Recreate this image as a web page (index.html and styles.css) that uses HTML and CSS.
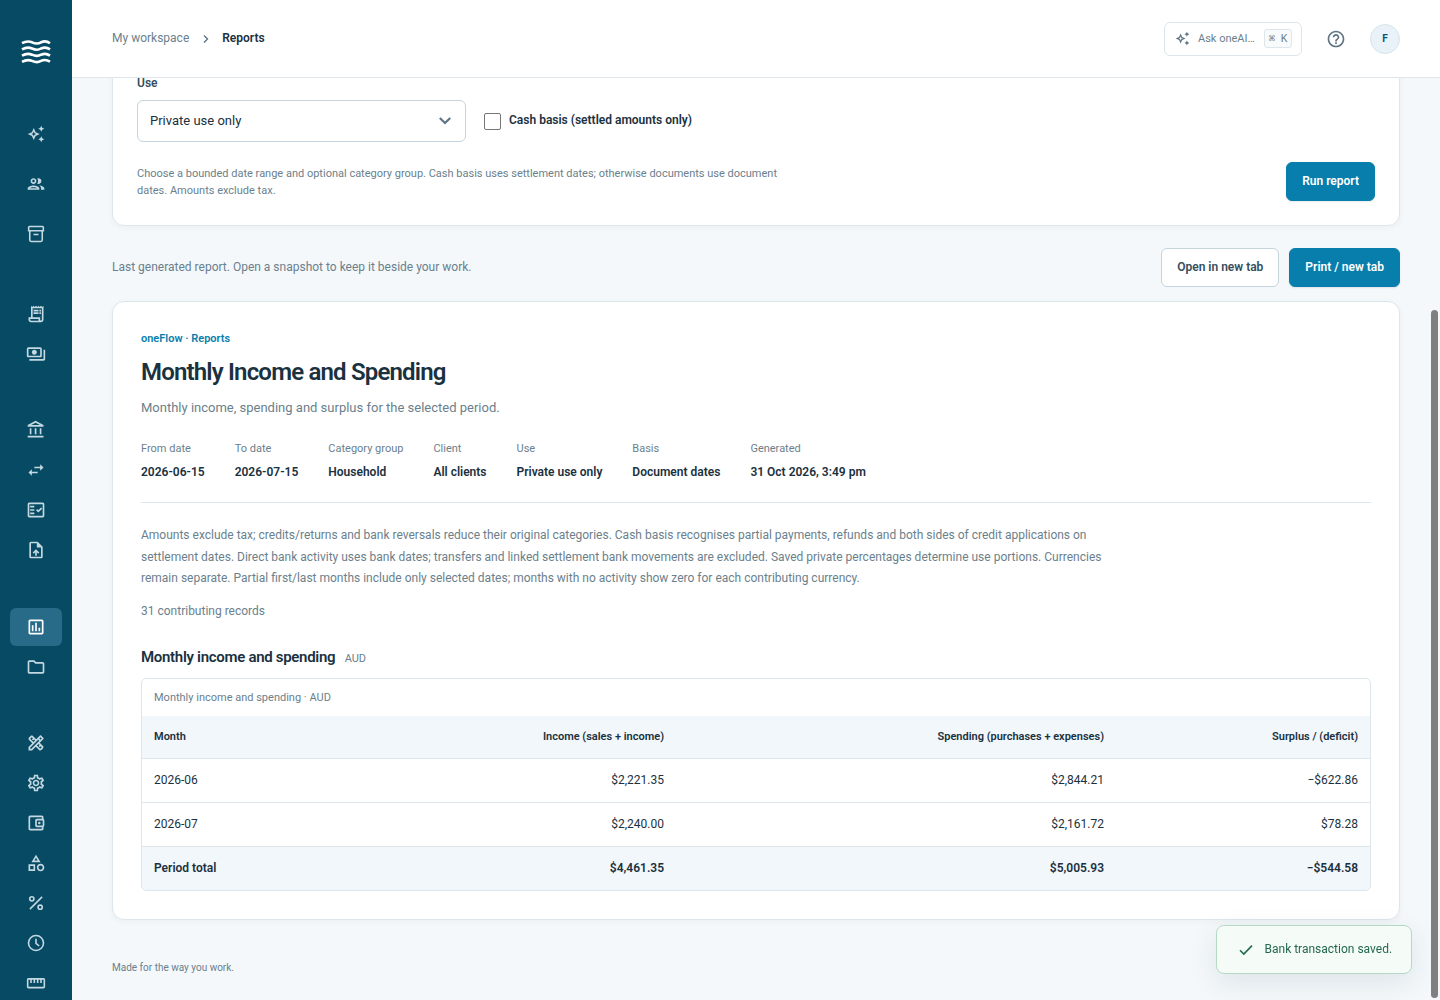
FILE: index.html
```html
<!DOCTYPE html>
<html lang="en">
<head>
    <meta charset="UTF-8">
    <meta name="viewport" content="width=device-width, initial-scale=1.0">
    <title>Reports - oneFlow</title>
    <link rel="stylesheet" href="styles.css">
</head>
<body>
    <!-- Sidebar -->
    <nav class="sidebar">
        <a class="logo" href="#" aria-label="oneFlow">
            <svg width="30" height="28" viewBox="0 0 30 28" fill="none" stroke="#fff" stroke-width="2.6"><path d="M1 4.2C5 2 8 2 11 3.3C15 5.2 17 5.2 20 3.3C23 2 26 2 29 4.2M1 10.4C5 8.2 8 8.2 11 9.5C15 11.4 17 11.4 20 9.5C23 8.2 26 8.2 29 10.4M1 16.6C5 14.4 8 14.4 11 15.7C15 17.6 17 17.6 20 15.7C23 14.4 26 14.4 29 16.6M1 22.8C5 20.6 8 20.6 11 21.9C15 23.8 17 23.8 20 21.9C23 20.6 26 20.6 29 22.8"/></svg>
        </a>
        <div class="nav-group nav-main">
            <a href="#" class="nav-item"><svg class="icon-sm" viewBox="0 0 24 24"><path d="M19 9l1.25-2.75L23 5l-2.75-1.25L19 1l-1.25 2.75L15 5l2.75 1.25L19 9zm0 6l-1.25 2.75L15 19l2.75 1.25L19 23l1.25-2.75L23 19l-2.75-1.25L19 15zm-7.5-5.5L9 4 6.5 9.5 1 12l5.5 2.5L9 20l2.5-5.5L17 12l-5.5-2.5zm-1.51 3.49L9 15.17l-.99-2.18L5.83 12l2.18-.99L9 8.83l.99 2.18 2.18.99-2.18.99z"/></svg></a>
            <a href="#" class="nav-item"><svg viewBox="0 0 24 24"><path d="M9 13.75c-2.34 0-7 1.17-7 3.5V19h14v-1.75c0-2.33-4.66-3.5-7-3.5zM4.34 17c.84-.58 2.87-1.25 4.66-1.25s3.82.67 4.66 1.25H4.34zM9 12c1.93 0 3.5-1.57 3.5-3.5S10.93 5 9 5 5.5 6.57 5.5 8.5 7.07 12 9 12zm0-5c.83 0 1.5.67 1.5 1.5S9.83 10 9 10s-1.5-.67-1.5-1.5S8.17 7 9 7zm7.04 6.81c1.16.84 1.96 1.96 1.96 3.44V19h4v-1.75c0-2.02-3.5-3.17-5.96-3.44zM15 12c1.93 0 3.5-1.57 3.5-3.5S16.93 5 15 5c-.54 0-1.04.13-1.5.35.63.89 1 1.98 1 3.15s-.37 2.26-1 3.15c.46.22.96.35 1.5.35z"/></svg></a>
            <a href="#" class="nav-item"><svg class="line" viewBox="0 0 24 24"><path d="M4.2 3h15.6a1 1 0 0 1 1 1v4H3.2V4a1 1 0 0 1 1-1zM4.5 8v11.3a1.6 1.6 0 0 0 1.6 1.6h11.8a1.6 1.6 0 0 0 1.6-1.6V8M9 12.5h6"/></svg></a>
        </div>
        <div class="nav-group nav-sales">
            <a href="#" class="nav-item"><svg viewBox="0 0 24 24"><path d="M19.5 3.5L18 2l-1.5 1.5L15 2l-1.5 1.5L12 2l-1.5 1.5L9 2 7.5 3.5 6 2v14H3v3c0 1.66 1.34 3 3 3h12c1.66 0 3-1.34 3-3V2l-1.5 1.5zM15 20H6c-.55 0-1-.45-1-1v-1h10v2zm4-1c0 .55-.45 1-1 1s-1-.45-1-1v-3H8V5h11v14zM9 7h6v2H9zM16 7h2v2h-2zM9 10h6v2H9zM16 10h2v2h-2z"/></svg></a>
            <a href="#" class="nav-item"><svg viewBox="0 0 24 24"><path d="M19 14V6c0-1.1-.9-2-2-2H3c-1.1 0-2 .9-2 2v8c0 1.1.9 2 2 2h14c1.1 0 2-.9 2-2zm-2 0H3V6h14v8zm-7-7c-1.66 0-3 1.34-3 3s1.34 3 3 3 3-1.34 3-3-1.34-3-3-3zm13 0v11c0 1.1-.9 2-2 2H4v-2h17V7h2z"/></svg></a>
        </div>
        <div class="nav-group nav-bank">
            <a href="#" class="nav-item"><svg viewBox="0 0 24 24"><path d="M6.5 10h-2v7h2v-7zm6 0h-2v7h2v-7zm8.5 9H2v2h19v-2zm-2.5-9h-2v7h2v-7zm-7-6.74L16.71 6H6.29l5.21-2.74m0-2.26L2 6v2h19V6l-9.5-5z"/></svg></a>
            <a href="#" class="nav-item"><svg viewBox="0 0 24 24"><path d="M6.99 11L3 15l3.99 4v-3H14v-2H6.99v-3zM21 9l-3.99-4v3H10v2h7.01v3L21 9z"/></svg></a>
            <a href="#" class="nav-item"><svg viewBox="0 0 24 24"><path d="M20 3H4c-1.1 0-2 .9-2 2v14c0 1.1.9 2 2 2h16c1.1 0 2-.9 2-2V5c0-1.1-.9-2-2-2zm0 16H4V5h16v14z"/><path d="M19.41 10.42L17.99 9l-3.17 3.17-1.41-1.42L12 12.16 14.82 15zM5 7h5v2H5zM5 11h5v2H5zM5 15h5v2H5z"/></svg></a>
            <a href="#" class="nav-item"><svg viewBox="0 0 24 24"><path d="M14 2H6c-1.1 0-1.99.9-1.99 2L4 20c0 1.1.89 2 1.99 2H18c1.1 0 2-.9 2-2V8l-6-6zm4 18H6V4h7v5h5v11zM8 15.01l1.41 1.41L11 14.84V19h2v-4.16l1.59 1.59L16 15.01 12.01 11z"/></svg></a>
        </div>
        <div class="nav-group nav-reports">
            <a href="#" class="nav-item active"><svg viewBox="0 0 24 24"><path d="M9 17H7v-7h2v7zm4 0h-2V7h2v10zm4 0h-2v-4h2v4zm2 2H5V5h14v14zm0-16H5c-1.1 0-2 .9-2 2v14c0 1.1.9 2 2 2h14c1.1 0 2-.9 2-2V5c0-1.1-.9-2-2-2z"/></svg></a>
            <a href="#" class="nav-item"><svg viewBox="0 0 24 24"><path d="M9.17 6l2 2H20v10H4V6h5.17M10 4H4c-1.1 0-1.99.9-1.99 2L2 18c0 1.1.9 2 2 2h16c1.1 0 2-.9 2-2V8c0-1.1-.9-2-2-2h-8l-2-2z"/></svg></a>
        </div>
        <div class="nav-group nav-setup">
            <a href="#" class="nav-item"><svg viewBox="0 0 24 24"><path d="M20.97 7.27c.39-.39.39-1.02 0-1.41l-2.83-2.83c-.39-.39-1.02-.39-1.41 0l-4.49 4.49-3.89-3.89c-.78-.78-2.05-.78-2.83 0l-1.9 1.9c-.78.78-.78 2.05 0 2.83l3.89 3.89L3 16.76V21h4.24l4.52-4.52 3.89 3.89c.95.95 2.23.6 2.83 0l1.9-1.9c.78-.78.78-2.05 0-2.83l-3.89-3.89 4.48-4.48zM5.04 6.94l1.89-1.9L8.2 6.31 7.02 7.5l1.41 1.41 1.19-1.19 1.2 1.2-1.9 1.9-3.88-3.88zm11.23 7.44l-1.19 1.19 1.41 1.41 1.19-1.19 1.27 1.27-1.9 1.9-3.89-3.89 1.9-1.9 1.21 1.21zM6.41 19H5v-1.41l9.61-9.61 1.3 1.3.11.11L6.41 19zm9.61-12.43l1.41-1.41 1.41 1.41-1.41 1.41-1.41-1.41z"/></svg></a>
            <a href="#" class="nav-item"><svg viewBox="0 0 24 24"><path d="M19.43 12.98c.04-.32.07-.64.07-.98 0-.34-.03-.66-.07-.98l2.11-1.65c.19-.15.24-.42.12-.64l-2-3.46c-.09-.16-.26-.25-.44-.25-.06 0-.12.01-.17.03l-2.49 1c-.52-.4-1.08-.73-1.69-.98l-.38-2.65C14.46 2.18 14.25 2 14 2h-4c-.25 0-.46.18-.49.42l-.38 2.65c-.61.25-1.17.59-1.69.98l-2.49-1c-.06-.02-.12-.03-.18-.03-.17 0-.34.09-.43.25l-2 3.46c-.13.22-.07.49.12.64l2.11 1.65c-.04.32-.07.65-.07.98 0 .33.03.66.07.98l-2.11 1.65c-.19.15-.24.42-.12.64l2 3.46c.09.16.26.25.44.25.06 0 .12-.01.17-.03l2.49-1c.52.4 1.08.73 1.69.98l.38 2.65c.03.24.24.42.49.42h4c.25 0 .46-.18.49-.42l.38-2.65c.61-.25 1.17-.59 1.69-.98l2.49 1c.06.02.12.03.18.03.17 0 .34-.09.43-.25l2-3.46c.12-.22.07-.49-.12-.64l-2.11-1.65zm-1.98-1.71c.04.31.05.52.05.73 0 .21-.02.43-.05.73l-.14 1.13.89.7 1.08.84-.7 1.21-1.27-.51-1.04-.42-.9.68c-.43.32-.84.56-1.25.73l-1.06.43-.16 1.13-.2 1.35h-1.4l-.19-1.35-.16-1.13-1.06-.43c-.43-.18-.83-.41-1.23-.71l-.91-.7-1.06.43-1.27.51-.7-1.21 1.08-.84.89-.7-.14-1.13c-.03-.31-.05-.54-.05-.74s.02-.43.05-.73l.14-1.13-.89-.7-1.08-.84.7-1.21 1.27.51 1.04.42.9-.68c.43-.32.84-.56 1.25-.73l1.06-.43.16-1.13.2-1.35h1.39l.19 1.35.16 1.13 1.06.43c.43.18.83.41 1.23.71l.91.7 1.06-.43 1.27-.51.7 1.21-1.07.85-.89.7.14 1.13zM12 8c-2.21 0-4 1.79-4 4s1.79 4 4 4 4-1.79 4-4-1.79-4-4-4zm0 6c-1.1 0-2-.9-2-2s.9-2 2-2 2 .9 2 2-.9 2-2 2z"/></svg></a>
            <a href="#" class="nav-item"><svg viewBox="0 0 24 24"><path d="M21 7.28V5c0-1.1-.9-2-2-2H5c-1.11 0-2 .9-2 2v14c0 1.1.89 2 2 2h14c1.1 0 2-.9 2-2v-2.28c.59-.35 1-.98 1-1.72V9c0-.74-.41-1.37-1-1.72zM20 9v6h-7V9h7zM5 19V5h14v2h-6c-1.1 0-2 .9-2 2v6c0 1.1.9 2 2 2h6v2H5z"/><circle cx="16" cy="12" r="1.5"/></svg></a>
            <a href="#" class="nav-item"><svg viewBox="0 0 24 24"><path d="M12 2l-5.5 9h11L12 2zm0 3.84L13.93 9h-3.87L12 5.84zM17.5 13c-2.49 0-4.5 2.01-4.5 4.5s2.01 4.5 4.5 4.5 4.5-2.01 4.5-4.5-2.01-4.5-4.5-4.5zm0 7c-1.38 0-2.5-1.12-2.5-2.5s1.12-2.5 2.5-2.5 2.5 1.12 2.5 2.5-1.12 2.5-2.5 2.5zM3 21.5h8v-8H3v8zm2-6h4v4H5v-4z"/></svg></a>
            <a href="#" class="nav-item"><svg class="line" viewBox="0 0 24 24"><path d="M19.3 4.7L4.7 19.3"/><circle cx="7" cy="7" r="2.5"/><circle cx="17" cy="17" r="2.5"/></svg></a>
            <a href="#" class="nav-item"><svg class="line" viewBox="0 0 24 24"><circle cx="12" cy="12" r="9"/><path d="M12 7v5.4l3.8 3.2"/></svg></a>
            <a href="#" class="nav-item"><svg class="line" viewBox="0 0 24 24"><rect x="2" y="7" width="20" height="10.5" rx="1"/><path d="M6 7v5M10 7v5M14 7v5M18 7v5"/></svg></a>
        </div>
    </nav>

    <div class="page">
        <!-- Top bar -->
        <header class="topbar">
            <div class="breadcrumb">
                <span>My workspace</span>
                <svg width="8" height="10" viewBox="0 0 8 10" fill="none" stroke="#5f7583" stroke-width="1.4"><path d="M2 1.5l3.5 3.5-3.5 3.5"/></svg>
                <b>Reports</b>
            </div>
            <div class="topbar-right">
                <div class="ask">
                    <svg width="15" height="15" viewBox="0 0 24 24" fill="#5f7583"><path d="M19 9l1.25-2.75L23 5l-2.75-1.25L19 1l-1.25 2.75L15 5l2.75 1.25L19 9zm0 6l-1.25 2.75L15 19l2.75 1.25L19 23l1.25-2.75L23 19l-2.75-1.25L19 15zm-7.5-5.5L9 4 6.5 9.5 1 12l5.5 2.5L9 20l2.5-5.5L17 12l-5.5-2.5zm-1.51 3.49L9 15.17l-.99-2.18L5.83 12l2.18-.99L9 8.83l.99 2.18 2.18.99-2.18.99z"/></svg>
                    <span class="ask-text">Ask oneAI…</span>
                    <kbd>⌘ K</kbd>
                </div>
                <svg class="help" width="20" height="20" viewBox="0 0 24 24" fill="#5f7583"><path d="M11 18h2v-2h-2v2zm1-16C6.48 2 2 6.48 2 12s4.48 10 10 10 10-4.48 10-10S17.52 2 12 2zm0 18c-4.41 0-8-3.59-8-8s3.59-8 8-8 8 3.59 8 8-3.59 8-8 8zm0-14c-2.21 0-4 1.79-4 4h2c0-1.1.9-2 2-2s2 .9 2 2c0 2-3 1.75-3 5h2c0-2.25 3-2.5 3-5 0-2.21-1.79-4-4-4z"/></svg>
                <div class="avatar">F</div>
            </div>
        </header>

        <main class="content">
            <!-- Report filters -->
            <section class="card filters">
                <div class="label">Use</div>
                <div class="filter-row">
                    <div class="select">
                        Private use only
                        <svg width="12" height="8" viewBox="0 0 12 8" fill="none" stroke="#5f7583" stroke-width="2.2"><path d="M.8 1l5.2 5 5.2-5"/></svg>
                    </div>
                    <label class="check"><span class="box"></span>Cash basis (settled amounts only)</label>
                </div>
                <div class="filter-foot">
                    <p>Choose a bounded date range and optional category group. Cash basis uses settlement dates; otherwise documents use document dates. Amounts exclude tax.</p>
                    <button class="btn primary">Run report</button>
                </div>
            </section>

            <div class="toolbar">
                <span>Last generated report. Open a snapshot to keep it beside your work.</span>
                <div class="actions">
                    <button class="btn">Open in new tab</button>
                    <button class="btn primary">Print / new tab</button>
                </div>
            </div>

            <!-- Generated report -->
            <section class="card report">
                <div class="eyebrow">oneFlow · Reports</div>
                <h1>Monthly Income and Spending</h1>
                <p class="subtitle">Monthly income, spending and surplus for the selected period.</p>
                <dl class="meta">
                    <div><dt>From date</dt><dd>2026-06-15</dd></div>
                    <div><dt>To date</dt><dd>2026-07-15</dd></div>
                    <div><dt>Category group</dt><dd>Household</dd></div>
                    <div><dt>Client</dt><dd>All clients</dd></div>
                    <div><dt>Use</dt><dd>Private use only</dd></div>
                    <div><dt>Basis</dt><dd>Document dates</dd></div>
                    <div><dt>Generated</dt><dd>31 Oct 2026, 3:49 pm</dd></div>
                </dl>
                <p class="notes">Amounts exclude tax; credits/returns and bank reversals reduce their original categories. Cash basis recognises partial payments, refunds and both sides of credit applications on settlement dates. Direct bank activity uses bank dates; transfers and linked settlement bank movements are excluded. Saved private percentages determine use portions. Currencies remain separate. Partial first/last months include only selected dates; months with no activity show zero for each contributing currency.</p>
                <p class="records">31 contributing records</p>
                <h2>Monthly income and spending <small>AUD</small></h2>
                <div class="table-wrap">
                    <table>
                        <caption>Monthly income and spending · AUD</caption>
                        <colgroup><col class="col-month"><col class="col-income"><col class="col-spending"><col></colgroup>
                        <thead>
                            <tr><th>Month</th><th>Income (sales + income)</th><th>Spending (purchases + expenses)</th><th>Surplus / (deficit)</th></tr>
                        </thead>
                        <tbody>
                            <tr><td>2026-06</td><td>$2,221.35</td><td>$2,844.21</td><td>−$622.86</td></tr>
                            <tr><td>2026-07</td><td>$2,240.00</td><td>$2,161.72</td><td>$78.28</td></tr>
                        </tbody>
                        <tfoot>
                            <tr><td>Period total</td><td>$4,461.35</td><td>$5,005.93</td><td>−$544.58</td></tr>
                        </tfoot>
                    </table>
                </div>
            </section>

            <footer>Made for the way you work.</footer>
        </main>
    </div>

    <div class="toast">
        <svg width="14" height="12" viewBox="0 0 14 12" fill="none" stroke="#23694c" stroke-width="1.6"><path d="M1 6.2l3.8 3.8L13 1.6"/></svg>
        Bank transaction saved.
    </div>
    <div class="scroll-thumb"></div>
</body>
</html>
```
FILE: styles.css
```css
* { box-sizing: border-box; }
body { margin: 0; height: 1000px; display: flex; overflow: hidden; font-family: Roboto, Arial, sans-serif; font-size: 12px; line-height: 15px; color: #1a3140; background: #f4f8fb; }
h1, h2, p, dl, dd { margin: 0; }

/* Sidebar */
.sidebar { width: 72px; height: 1000px; flex: none; overflow: hidden; background: #064a63; display: flex; flex-direction: column; align-items: center; }
.logo { flex: none; height: 28px; margin-top: 38.5px; }
.logo svg { display: block; }
.nav-group { flex: none; display: flex; flex-direction: column; gap: 2px; }
.nav-main { margin-top: 48px; gap: 12px; }
.nav-sales { margin-top: 42px; }
.nav-bank { margin-top: 38.5px; }
.nav-reports { margin-top: 38.5px; }
.nav-setup { margin-top: 38.5px; }
.nav-item { width: 52px; height: 38px; border-radius: 6px; display: flex; align-items: center; justify-content: center; }
.nav-item svg { width: 20px; height: 20px; fill: #c4d8e2; }
.nav-item .icon-sm { width: 18px; height: 18px; }
.nav-item .line { fill: none; stroke: #c4d8e2; stroke-width: 1.9; }
.nav-item.active { background: #276b88; }
.nav-item.active svg { fill: #fff; }

/* Top bar */
.page { flex: 1; min-width: 0; height: 1000px; display: flex; flex-direction: column; }
.topbar { flex: none; height: 78px; padding: 0 40px; background: #fff; border-bottom: 1px solid #dfe7ec; display: flex; align-items: center; justify-content: space-between; }
.breadcrumb { display: flex; align-items: center; gap: 12.5px; color: #6b7f8c; }
.breadcrumb b { font-weight: 600; color: #1a3140; }
.topbar-right { display: flex; align-items: center; }
.ask { width: 138px; height: 34px; padding: 0 9px 0 10px; border: 1px solid #dde6eb; border-radius: 6px; display: flex; align-items: center; color: #6b7f8c; font-size: 11px; }
.ask-text { margin-left: 8px; }
kbd { margin-left: auto; width: 28px; height: 19px; line-height: 17px; text-align: center; border: 1px solid #dde6eb; border-radius: 3px; background: #f8fafc; font-family: Roboto, "DejaVu Sans Mono", monospace; font-size: 10.5px; word-spacing: 3px; white-space: nowrap; }
.help { margin: 0 24px; }
.avatar { width: 30px; height: 30px; border-radius: 50%; background: #e8f2f8; border: 1px solid #d5e4eb; color: #065378; font-size: 10px; font-weight: 700; display: flex; align-items: center; justify-content: center; }

/* Content */
.content { flex: 1; min-height: 0; overflow: hidden; padding: 0 40px; }
.card { background: #fff; border: 1px solid #dde6eb; border-radius: 12px; box-shadow: 0 2px 6px rgba(22, 45, 59, 0.04); }
.btn { height: 39px; padding: 0 15px; border: 1px solid #c5d4dd; border-radius: 6px; background: #fff; color: #344e5e; font-family: inherit; font-size: 12px; line-height: 15px; font-weight: 600; }
.btn.primary { background: #087eac; border-color: #087eac; color: #fff; box-shadow: 0 1px 2px rgba(22, 45, 59, 0.1); }

.filters { margin-top: -28px; padding: 23px 24px 24px; }
.label { height: 18px; line-height: 18px; font-size: 12px; font-weight: 600; color: #344e5e; }
.filter-row { display: flex; align-items: center; gap: 18px; margin-top: 8px; }
.select { width: 329px; height: 42px; padding: 0 14px 0 12px; border: 1px solid #c5d4dd; border-radius: 6px; display: flex; align-items: center; justify-content: space-between; font-size: 13px; line-height: 14px; }
.check { display: flex; align-items: center; gap: 8px; font-weight: 600; line-height: 17px; padding-bottom: 1px; }
.box { width: 17px; height: 17px; margin-bottom: -1px; border: 1px solid #767676; border-radius: 2px; }
.filter-foot { display: flex; align-items: center; justify-content: space-between; margin-top: 20px; }
.filter-foot p { width: 650px; font-size: 11px; line-height: 17px; color: #6b7f8c; }

.toolbar { display: flex; align-items: center; justify-content: space-between; margin-top: 22px; color: #6b7f8c; }
.actions { display: flex; gap: 10px; }

.report { margin-top: 14px; height: 619px; padding: 28px; }
.eyebrow { padding-top: 1px; line-height: 16px; font-size: 11px; font-weight: 600; color: #087eac; }
h1 { margin-top: 9px; line-height: 32px; font-size: 24px; font-weight: 600; letter-spacing: -0.82px; }
.subtitle { margin-top: 10px; line-height: 20px; font-size: 13px; color: #6b7f8c; }
.meta { display: flex; gap: 30px; margin-top: 22px; padding-bottom: 21px; border-bottom: 1px solid #dde6eb; }
dt { line-height: 18px; font-size: 11px; color: #6b7f8c; }
dd { margin-top: 5px; line-height: 18px; font-weight: 600; }
.notes { width: 980px; margin-top: 22px; line-height: 21.6px; color: #6b7f8c; }
.records { margin-top: 10px; line-height: 22px; color: #6b7f8c; }
h2 { margin-top: 25px; line-height: 20px; font-size: 15px; font-weight: 600; letter-spacing: -0.3px; }
small { margin-left: 6px; font-size: 11px; font-weight: 400; letter-spacing: -0.1px; color: #6b7f8c; }

.table-wrap { margin-top: 9px; border: 1px solid #dde6eb; border-radius: 5px; overflow: hidden; }
table { width: 100%; table-layout: fixed; border-collapse: separate; border-spacing: 0; line-height: 14px; }
.col-month { width: 243px; }
.col-income { width: 291px; }
.col-spending { width: 440px; }
caption { height: 37px; line-height: 37px; padding: 0 12px; text-align: left; font-size: 11px; color: #6b7f8c; }
th, td { padding: 0 12px; text-align: right; border-bottom: 1px solid #dde6eb; }
th:first-child, td:first-child { text-align: left; }
th { height: 43px; font-size: 11px; font-weight: 600; background: #f2f7fc; }
td { height: 44px; }
tfoot td { height: 43px; border-bottom: 0; font-weight: 600; background: #f2f7fc; }

footer { margin-top: 40px; line-height: 16px; font-size: 10px; color: #6b7f8c; }

/* Toast and scroll thumb sit over the page */
.toast { position: fixed; right: 28px; bottom: 26px; width: 196px; height: 49px; padding-left: 21.5px; display: flex; align-items: center; gap: 12px; border: 1px solid #b5d9c5; border-radius: 8px; background: #f5fbf7; color: #23694c; box-shadow: 0 8px 28px rgba(22, 45, 59, 0.1); }
.scroll-thumb { position: fixed; right: 2px; top: 310px; width: 7px; height: 688px; border-radius: 4px; background: #7f7f7f; }
```
